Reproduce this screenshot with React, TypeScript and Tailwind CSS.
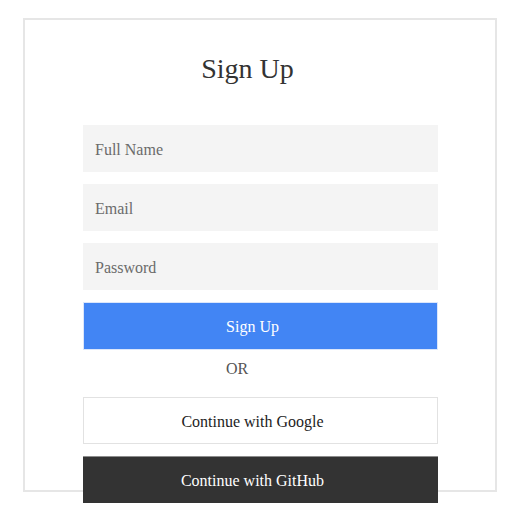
import React from 'react';

const fields = ['Full Name', 'Email', 'Password'];

const App: React.FC = () => {
  return (
    <div className="min-h-[526px] bg-white font-['Liberation_Serif',serif] text-[16px]">
      <div className="ml-[23px] pt-[18px]">
        <div className="w-[474px] h-[474px] border-2 border-[#e6e6e6] bg-white">
          <h1 className="pt-[33px] pr-[25px] text-center text-[28px] leading-[32px] text-[#333]">Sign Up</h1>

          <form className="mt-[40px] ml-[58px] w-[355px] flex flex-col" onSubmit={(e) => e.preventDefault()}>
            <div className="flex flex-col gap-[12px]">
              {fields.map((f) => (
                <input
                  key={f}
                  type={f === 'Password' ? 'password' : 'text'}
                  placeholder={f}
                  className="h-[47px] w-full bg-[#f4f4f4] px-[12px] pt-[2px] text-[16px] text-[#333] placeholder:text-[#6b6b6b] outline-none"
                />
              ))}
              <button
                type="submit"
                className="h-[48px] w-full border border-[#dbe6fb] bg-[#4285f4] pr-[16px] pt-[2px] text-center text-[16px] text-white"
              >
                Sign Up
              </button>
            </div>

            <div className="h-[47px] pt-[10px] pr-[47px] text-center leading-[18px] text-[#555]">OR</div>

            <div className="flex flex-col gap-[12px]">
              <button
                type="button"
                className="h-[47px] w-full border border-[#e2e2e2] bg-white pr-[16px] pt-[2px] text-center text-[16px] text-[#222]"
              >
                Continue with Google
              </button>
              <button
                type="button"
                className="h-[47px] w-full border-t border-[#8c8c8c] bg-[#333] pr-[16px] pt-[2px] text-center text-[16px] text-white"
              >
                Continue with GitHub
              </button>
            </div>
          </form>
        </div>
      </div>
    </div>
  );
};

export default App;
